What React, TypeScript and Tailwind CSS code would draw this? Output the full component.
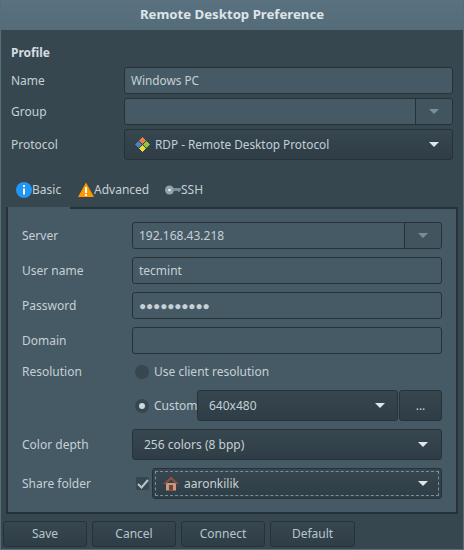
const field = "h-[27px] rounded-[3px] border border-[#263238] bg-[#465a65] flex items-center";
const combo = "rounded-[3px] border border-[#263238] bg-gradient-to-b from-[#37474f] to-[#2f3e46] flex items-center";

function Caret({ dim }: { dim?: boolean }) {
  return (
    <svg width="10" height="5" viewBox="0 0 10 5" className="shrink-0">
      <path d="M0 0h10L5 5z" fill={dim ? "#78909c" : "#dfe6e9"} />
    </svg>
  );
}

function Label({ children, className = "" }: { children: React.ReactNode; className?: string }) {
  return <div className={"text-[12px] text-[#c5d0d6] " + className}>{children}</div>;
}

function Button({ children, w }: { children: React.ReactNode; w: string }) {
  return (
    <div className={combo + " h-[26px] justify-center text-[12px] text-[#b8c5cc] " + w}>{children}</div>
  );
}

export default function App() {
  return (
    <div
      className="w-[464px] h-[550px] bg-[#37474f] border-x border-b border-[#566e7a] flex flex-col overflow-hidden text-[#c5d0d6]"
      style={{ fontFamily: '"Noto Sans", sans-serif' }}
    >
      <div className="-mx-px h-[30px] shrink-0 bg-gradient-to-b from-[#5a7280] to-[#546c78] flex items-center justify-center text-[13.2px] font-bold text-[#dde5e9]">
        Remote Desktop Preference
      </div>

      <div className="px-[10px] pt-[14px]">
        <div className="text-[12px] font-bold text-[#d5dde1] h-[17px] leading-[17px]">Profile</div>
        <div className="mt-[6px] flex items-center">
          <Label className="w-[113px]">Name</Label>
          <div className={field + " flex-1 px-[6px] text-[11.8px]"}>Windows PC</div>
        </div>
        <div className="mt-[4px] flex items-center">
          <Label className="w-[113px]">Group</Label>
          <div className={field + " flex-1"}>
            <div className="flex-1 h-full border-r border-[#263238]" />
            <div className="w-[36px] h-full bg-[#42555f] rounded-r-[3px] flex justify-center items-center"><Caret dim /></div>
          </div>
        </div>
        <div className="mt-[4px] flex items-center">
          <Label className="w-[113px]">Protocol</Label>
          <div className={combo + " flex-1 h-[31px] pl-[9px] pr-[13px] text-[11.8px] gap-[4px]"}>
            <svg width="17" height="17" viewBox="0 0 17 17" className="shrink-0">
              <path d="M8.5 1.5 L11.5 4.5 L8.5 7.5 L5.5 4.5z" fill="#e8804a" stroke="#e8804a" strokeLinejoin="round" />
              <path d="M12.5 5.5 L15.5 8.5 L12.5 11.5 L9.5 8.5z" fill="#8cc63f" stroke="#8cc63f" strokeLinejoin="round" />
              <path d="M8.5 9.5 L11.5 12.5 L8.5 15.5 L5.5 12.5z" fill="#f2d43d" stroke="#f2d43d" strokeLinejoin="round" />
              <path d="M4.5 5.5 L7.5 8.5 L4.5 11.5 L1.5 8.5z" fill="#4f81bd" stroke="#4f81bd" strokeLinejoin="round" />
            </svg>
            <span className="flex-1">RDP - Remote Desktop Protocol</span>
            <Caret />
          </div>
        </div>
      </div>

      <div className="h-[47px] shrink-0 pl-[15px] flex items-center pt-[12px] text-[12px] text-[#c5d0d6]">
        <div className="flex items-center w-[62px]">
          <svg width="16" height="16" viewBox="0 0 16 16" className="shrink-0">
            <circle cx="8" cy="8" r="8" fill="#2196f3" />
            <rect x="7" y="3" width="2" height="2" fill="#fff" />
            <rect x="7" y="6.5" width="2" height="6" fill="#fff" />
          </svg>
          <span>Basic</span>
        </div>
        <div className="flex items-center w-[87px]">
          <svg width="16" height="16" viewBox="0 0 16 16" className="shrink-0">
            <path d="M8 0.5 L16 15 H0z" fill="#ff9800" />
            <rect x="7" y="5" width="2" height="6" fill="#fff" />
            <rect x="7" y="12" width="2" height="2" fill="#fff" />
          </svg>
          <span>Advanced</span>
        </div>
        <div className="flex items-center">
          <svg width="16" height="16" viewBox="0 0 16 16" className="shrink-0">
            <circle cx="4.5" cy="8" r="4.5" fill="#90a4ae" />
            <circle cx="4.5" cy="8" r="1.3" fill="#eceff1" />
            <path d="M8 6 H16 V9 H14.5 V10 H13 V9 H8z" fill="#78909c" />
          </svg>
          <span>SSH</span>
        </div>
      </div>

      <div className="relative mx-[5px] h-[307px] shrink-0 border-2 border-[#263238] bg-[#465a65] px-[14px] pt-[13px]">
        <div className="absolute -top-[2px] left-0 w-[62px] h-[2px] bg-[#465a65]" />
        <div className="flex items-center">
          <Label className="w-[110px]">Server</Label>
          <div className={field + " flex-1"}>
            <div className="flex-1 h-full border-r border-[#263238] px-[6px] flex items-center text-[12px]">192.168.43.218</div>
            <div className="w-[36px] h-full bg-[#42555f] rounded-r-[3px] flex justify-center items-center"><Caret dim /></div>
          </div>
        </div>
        <div className="mt-[8px] flex items-center">
          <Label className="w-[110px]">User name</Label>
          <div className={field + " flex-1 px-[6px] text-[12px]"}>tecmint</div>
        </div>
        <div className="mt-[8px] flex items-center">
          <Label className="w-[110px]">Password</Label>
          <div className={field + " flex-1 px-[6px] text-[12px] tracking-[-0.2px]"}>●●●●●●●●●●</div>
        </div>
        <div className="mt-[8px] flex items-center">
          <Label className="w-[110px]">Domain</Label>
          <div className={field + " flex-1"} />
        </div>
        <div className="mt-[7px] h-[21px] flex items-center">
          <Label className="w-[113px]">Resolution</Label>
          <div className="w-[14px] h-[14px] rounded-full bg-[#37474f]" />
          <Label className="ml-[5px]">Use client resolution</Label>
        </div>
        <div className="mt-[8px] flex items-center">
          <div className="w-[113px]" />
          <div className="w-[14px] h-[14px] rounded-full bg-[#37474f] flex items-center justify-center">
            <div className="w-[6px] h-[6px] rounded-full bg-[#cfd8dc]" />
          </div>
          <Label className="ml-[5px] w-[43px]">Custom</Label>
          <div className={combo + " w-[201px] h-[31px] pl-[11px] pr-[12px] justify-between text-[12px]"}>
            <span>640x480</span>
            <Caret />
          </div>
          <div className={combo + " ml-px flex-1 h-[31px] justify-center text-[12px]"}>...</div>
        </div>
        <div className="mt-[8px] flex items-center">
          <Label className="w-[110px]">Color depth</Label>
          <div className={combo + " flex-1 h-[31px] pl-[11px] pr-[13px] justify-between text-[12px]"}>
            <span>256 colors (8 bpp)</span>
            <Caret />
          </div>
        </div>
        <div className="mt-[8px] flex items-center">
          <Label className="w-[114px]">Share folder</Label>
          <div className="w-[13px] h-[13px] mr-[3px] rounded-[2px] bg-[#37474f] flex items-center justify-center">
            <svg width="12" height="10" viewBox="0 0 12 10" className="shrink-0">
              <path d="M1 5 L4.5 8.5 L11 1" stroke="#b8c5cc" strokeWidth="2" fill="none" />
            </svg>
          </div>
          <div className={combo + " flex-1 h-[31px] p-[2px]"}>
            <div className="w-full h-full border border-dashed border-[#78909c] pl-[7px] pr-[10px] flex items-center text-[12px]">
              <svg width="16" height="15" viewBox="0 0 16 15" className="shrink-0 mr-[5px]">
                <path d="M3 7 H13 V14.5 H3z" fill="#c79a88" />
                <path d="M8 0.5 L16 8 H13 L8 3.5 L3 8 H0z" fill="#8f4f3f" />
                <rect x="6" y="9" width="4" height="5.5" fill="#7a4030" />
              </svg>
              <span className="flex-1">aaronkilik</span>
              <Caret />
            </div>
          </div>
        </div>
      </div>

      <div className="pl-[2px] pt-[7px] flex gap-[5px]">
        <Button w="w-[84px]">Save</Button>
        <Button w="w-[84px]">Cancel</Button>
        <Button w="w-[84px]">Connect</Button>
        <Button w="w-[85px]">Default</Button>
      </div>
    </div>
  );
}
